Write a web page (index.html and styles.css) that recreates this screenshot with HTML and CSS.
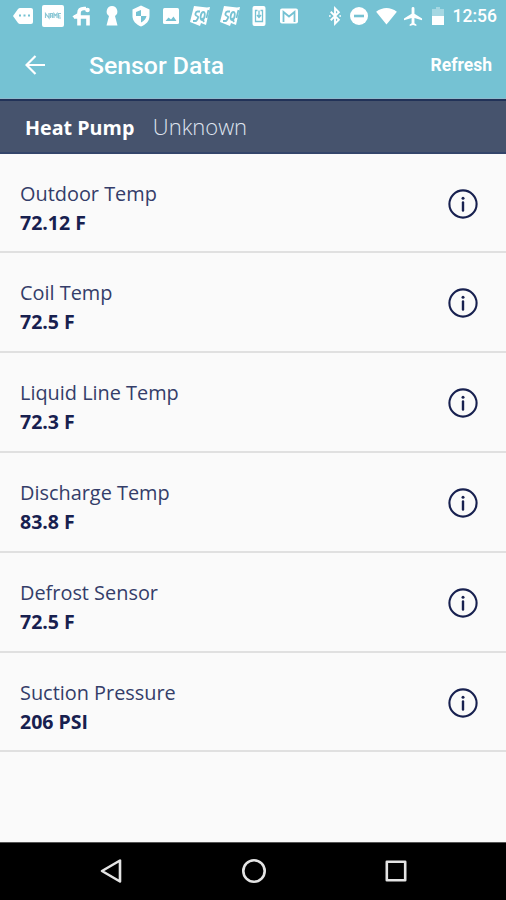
FILE: index.html
```html
<!DOCTYPE html>
<html lang="en">
<head>
<meta charset="utf-8">
<title>Sensor Data</title>
<link rel="stylesheet" href="styles.css">
</head>
<body>
<svg width="0" height="0" class="defs">
  <symbol id="info" viewBox="0 0 30 30"><circle cx="15" cy="15" r="13.6" fill="none" stroke="currentColor" stroke-width="2.1"/><circle cx="15" cy="9.3" r="1.5" fill="currentColor"/><path d="M15 13.500v8" stroke="currentColor" stroke-width="2.4" stroke-linecap="round"/></symbol>
  <symbol id="note" viewBox="0 0 24 24"><path fill="#fff" d="m6 2 13 1.500 3-.5-4 18-5-2-1 3-10-4z"/><g fill="none" stroke="#75c2d3" stroke-width="1.800"><path d="M12 7.500H9.500Q8 7.500 7.500 9.500T9 12t.5 3-2 2H5M15.500 8c-3 0-4 8-1.500 8s4-8 1.500-8zM14 14l2 4M20.500 6l-2 8"/></g></symbol>
</svg>
<header class="top">
  <div class="status">
    <div class="notices">
      <svg viewBox="0 0 24 24"><path fill="#fff" d="m2 12 5-7q1-1 2-1h11q2 0 2 2v12q0 2-2 2H9q-1 0-2-1z"/><path stroke="#75c2d3" stroke-width="2" stroke-dasharray="2 2.500" d="M8 11.500h12"/></svg>
      <svg viewBox="0 0 24 24"><rect x="1" y="1" width="22" height="22" rx="2" fill="#fff"/><path fill="none" stroke="#8dc8d6" stroke-width="1.200" d="M4.500 14V9.500L8 14V9M9.500 14v-4.500h2V14M9.500 12h2M13 14v-4.500l1.500 2 1.500-2V14M20 9.500h-2.500V14H20M17.500 12h2"/></svg>
      <svg viewBox="0 0 24 24"><g fill="none" stroke="#fff" stroke-width="3.600"><path d="M16 4.500h-2Q9 4.500 9 9v12.500M4 13h14v8.500"/></g><circle cx="17.500" cy="6" r="2.300" fill="#fff"/><path stroke="#fff" stroke-width="2" d="m3 13 5-3"/></svg>
      <svg viewBox="0 0 24 24"><path fill="#fff" d="M12 2a5.500 5.500 0 0 1 3 10l2.500 9.500h-11L9 12a5.500 5.500 0 0 1 3-10z"/></svg>
      <svg viewBox="0 0 24 24"><path fill="#fff" d="m12 1.500 8.500 4V12c0 5-3.500 8.500-8.500 10.500C7 20.500 3.500 17 3.500 12V5.500z"/><path fill="#75c2d3" d="M12 6v6H7V8zM12 12h5.500c-.5 3-2.500 5-5.500 6.500z"/></svg>
      <svg viewBox="0 0 24 24"><rect x="4" y="4" width="16" height="16" rx="1.500" fill="#fff"/><path fill="#75c2d3" d="m6.500 17 3-3.500 2.500 2 2.500-3 3 4.500z"/></svg>
      <svg viewBox="0 0 24 24"><use href="#note"/></svg>
      <svg viewBox="0 0 24 24"><use href="#note"/></svg>
      <svg viewBox="0 0 24 24"><rect x="5.500" y="2" width="13" height="20" rx="2" fill="#fff"/><path fill="none" stroke="#75c2d3" stroke-width="1.300" d="M10.500 6.500h-2v11h7v-11h-2M12 6.500v7m-2-2.500 2 2.500 2-2.500"/></svg>
      <svg viewBox="0 0 24 24"><rect x="3" y="4.500" width="18" height="15" rx="2" fill="#fff"/><path fill="none" stroke="#75c2d3" stroke-width="1.800" d="M6.500 18V8L12 12.500 17.500 8v10"/></svg>
    </div>
    <div class="system">
      <svg class="bt" viewBox="0 0 14 22"><path fill="none" stroke="#fff" stroke-width="2.200" d="m2 6 9.500 9.500L7 20V2l4.500 4.500L2 16"/><path fill="#fff" d="M0 10h2v2H0zM12 10h2v2h-2z"/></svg>
      <svg class="dnd" viewBox="0 0 18 18"><circle cx="9" cy="9" r="9" fill="#fff"/><path fill="#75c2d3" d="M4 7.700h10v2.600H4z"/></svg>
      <svg class="wifi" viewBox="0 0 22 18"><path fill="#fff" d="M0 4q11-8 22 0L11 17.500z"/></svg>
      <svg class="plane" viewBox="2 2 20 20"><path fill="#fff" d="M21 16v-2l-8-5V3.500a1.500 1.500 0 0 0-3 0V9l-8 5v2l8-2.500V19l-2 1.500V22l3.500-1 3.500 1v-1.500L13 19v-5.500z"/></svg>
      <svg class="batt" viewBox="0 0 12 18"><path fill="#fff" opacity=".35" d="M4 0h4v2h4v7H0V2h4z"/><path fill="#fff" d="M0 9h12v9H0z"/></svg>
      <span class="time">12:56</span>
    </div>
  </div>
  <div class="bar">
    <svg class="back" viewBox="0 0 20 20"><path fill="none" stroke="#fff" stroke-width="2.200" d="M20 10H2M10.500 1 1.500 10l9 9"/></svg>
    <h1>Sensor Data</h1>
    <span class="refresh">Refresh</span>
  </div>
</header>
<section class="device"><b>Heat Pump</b><span>Unknown</span></section>
<main>
  <div class="row"><div><p>Outdoor Temp</p><strong>72.12 F</strong></div><svg><use href="#info"/></svg></div>
  <div class="row"><div><p>Coil Temp</p><strong>72.5 F</strong></div><svg><use href="#info"/></svg></div>
  <div class="row"><div><p>Liquid Line Temp</p><strong>72.3 F</strong></div><svg><use href="#info"/></svg></div>
  <div class="row"><div><p>Discharge Temp</p><strong>83.8 F</strong></div><svg><use href="#info"/></svg></div>
  <div class="row"><div><p>Defrost Sensor</p><strong>72.5 F</strong></div><svg><use href="#info"/></svg></div>
  <div class="row"><div><p>Suction Pressure</p><strong>206 PSI</strong></div><svg><use href="#info"/></svg></div>
</main>
<nav>
  <svg viewBox="0 0 26 26"><path d="M21 2.500v21L3 13z"/></svg>
  <svg viewBox="0 0 26 26"><circle cx="13" cy="13" r="10.700"/></svg>
  <svg viewBox="0 0 26 26"><rect x="3.800" y="3.800" width="18.400" height="18.400"/></svg>
</nav>
</body>
</html>
```
FILE: styles.css
```css
* { box-sizing: border-box; }
body { margin: 0; width: 506px; height: 900px; display: flex; flex-direction: column; overflow: hidden; background: #fafafa; color: #17204f; font-family: "Open Sans", sans-serif; }
svg { flex: none; display: block; }
.defs { position: absolute; }
.top { height: 99px; background: #75c2d3; color: #fff; font-family: Roboto, sans-serif; border-bottom: 1px solid #8fb9cc; }
.status { height: 32px; padding: 0 9px 0 11px; display: flex; justify-content: space-between; align-items: center; }
.notices { display: flex; gap: 5.500px; margin-top: -1px; }
.notices svg { width: 24px; height: 24px; }
.system { display: flex; align-items: center; }
.bt { width: 12px; height: 20px; margin-right: 9px; }
.dnd { width: 18px; height: 18px; margin-right: 8px; }
.wifi { width: 21px; height: 17px; margin-right: 7px; }
.plane { width: 19px; height: 19px; margin-right: 9px; }
.batt { width: 12px; height: 18px; margin-right: 9px; }
.time { font-size: 17.500px; font-weight: 500; line-height: 32px; }
.bar { height: 66px; display: flex; align-items: center; padding: 0 14px 0 25px; }
.back { width: 20px; height: 20px; margin-right: 44px; }
h1 { margin: 2px 0 0; font-size: 24.800px; font-weight: 500; line-height: 30px; }
.refresh { margin-left: auto; font-size: 17.500px; font-weight: 700; }
.device { height: 55px; padding-left: 25px; background: #46536d; border-top: 2px solid #213258; border-bottom: 2px solid #34456a; color: #fff; display: flex; align-items: center; gap: 18.500px; font-size: 19.700px; }
.device b { margin-top: 1px; }
.device span { font-size: 22px; font-weight: 300; color: #dfe4ef; margin-top: -1px; }
main { flex: 1; }
.row { height: 99.900px; padding: 4px 28px 0 20px; display: flex; justify-content: space-between; align-items: center; border-bottom: 2px solid #e0e0e0; }
.row:first-child { height: 99px; }
.row > div { margin-top: 6px; }
p { margin: 0; font-size: 19.900px; line-height: 29px; color: #343d69; }
strong { display: block; font-size: 19.500px; line-height: 29px; }
.row svg { width: 30px; height: 30px; margin-bottom: 2px; }
nav { height: 58px; background: #000; border-top: 1px solid #555; display: flex; justify-content: space-between; align-items: center; padding: 0 97px 2px 99px; }
nav svg { width: 26px; height: 26px; fill: none; stroke: #e4e4e4; stroke-width: 2.600; stroke-linejoin: round; }
```
